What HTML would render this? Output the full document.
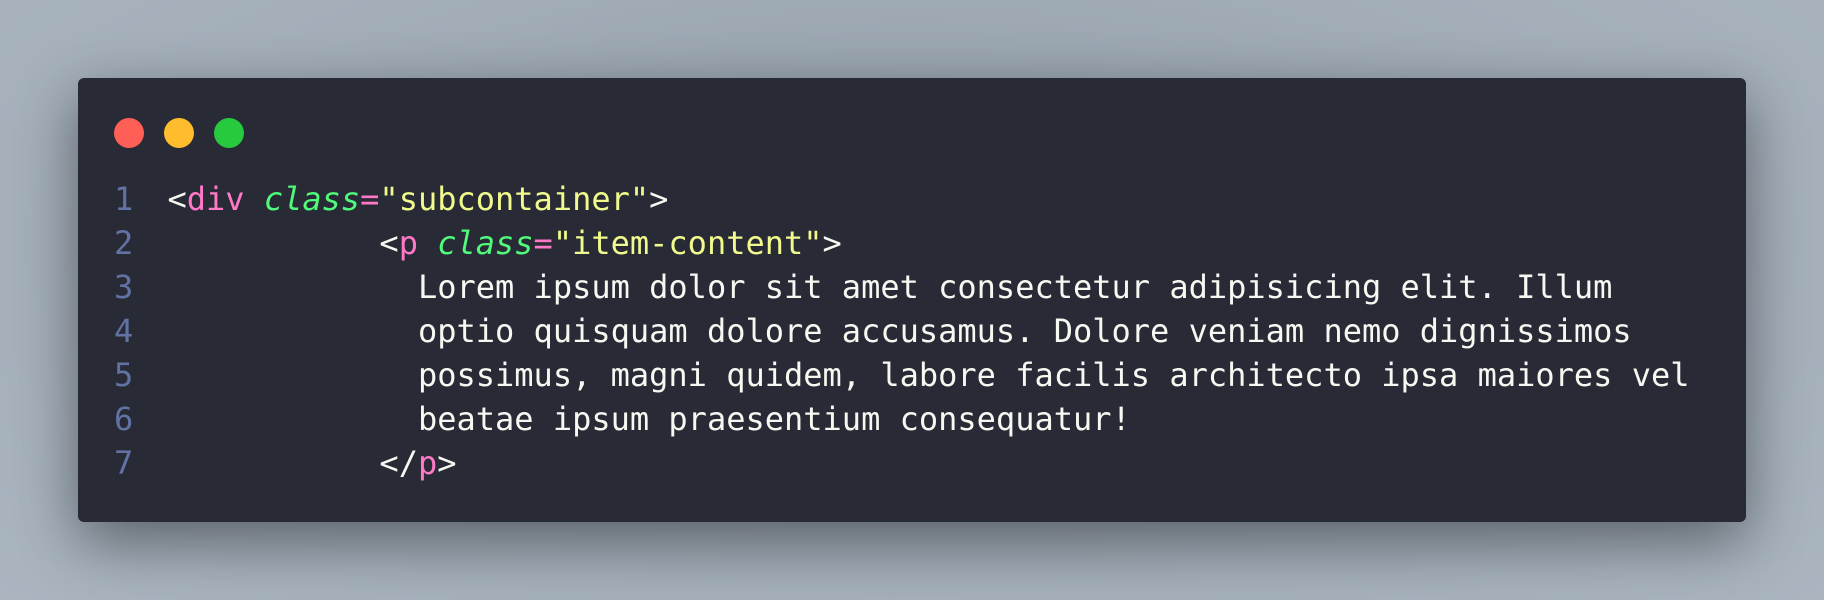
<!DOCTYPE html>
<html><head><meta charset="utf-8"><style>
html,body{margin:0;padding:0}
body{width:1824px;height:600px;overflow:hidden;background:radial-gradient(ellipse at 50% 40%,#8e9aa5 0%,#a3aeb9 60%,#aab5c0 100%);position:relative;font-family:"DejaVu Sans Mono","Liberation Mono",monospace}
.win{position:absolute;left:78px;top:78px;width:1668px;height:444px;background:#282a36;border-radius:6px;box-shadow:0 20px 60px rgba(0,0,0,.45)}
.dot{position:absolute;top:118px;width:30px;height:30px;border-radius:50%}
.l{position:absolute;left:0;height:44px;line-height:44px;font-size:32px;white-space:pre;color:#f8f8f2}
.n{position:absolute;left:114px;color:#6272a4}
.c{position:absolute;left:167.5px}
.t{color:#ff79c6}.a{color:#50fa7b;font-style:italic}.s{color:#f1fa8c}.p{color:#ff79c6}
</style></head><body>
<div class="win"></div>
<div class="dot" style="left:114px;background:#ff5f56"></div>
<div class="dot" style="left:164px;background:#ffbd2e"></div>
<div class="dot" style="left:214px;background:#27c93f"></div>
<div class="l" style="top:177px"><span class="n">1</span><span class="c">&lt;<span class="t">div</span> <span class="a">class</span><span class="p">=</span><span class="s">"subcontainer"</span>&gt;</span></div>
<div class="l" style="top:221px"><span class="n">2</span><span class="c">           &lt;<span class="t">p</span> <span class="a">class</span><span class="p">=</span><span class="s">"item-content"</span>&gt;</span></div>
<div class="l" style="top:265px"><span class="n">3</span><span class="c">             Lorem ipsum dolor sit amet consectetur adipisicing elit. Illum</span></div>
<div class="l" style="top:309px"><span class="n">4</span><span class="c">             optio quisquam dolore accusamus. Dolore veniam nemo dignissimos</span></div>
<div class="l" style="top:353px"><span class="n">5</span><span class="c">             possimus, magni quidem, labore facilis architecto ipsa maiores vel</span></div>
<div class="l" style="top:397px"><span class="n">6</span><span class="c">             beatae ipsum praesentium consequatur!</span></div>
<div class="l" style="top:441px"><span class="n">7</span><span class="c">           &lt;/<span class="t">p</span>&gt;</span></div>
</body></html>
